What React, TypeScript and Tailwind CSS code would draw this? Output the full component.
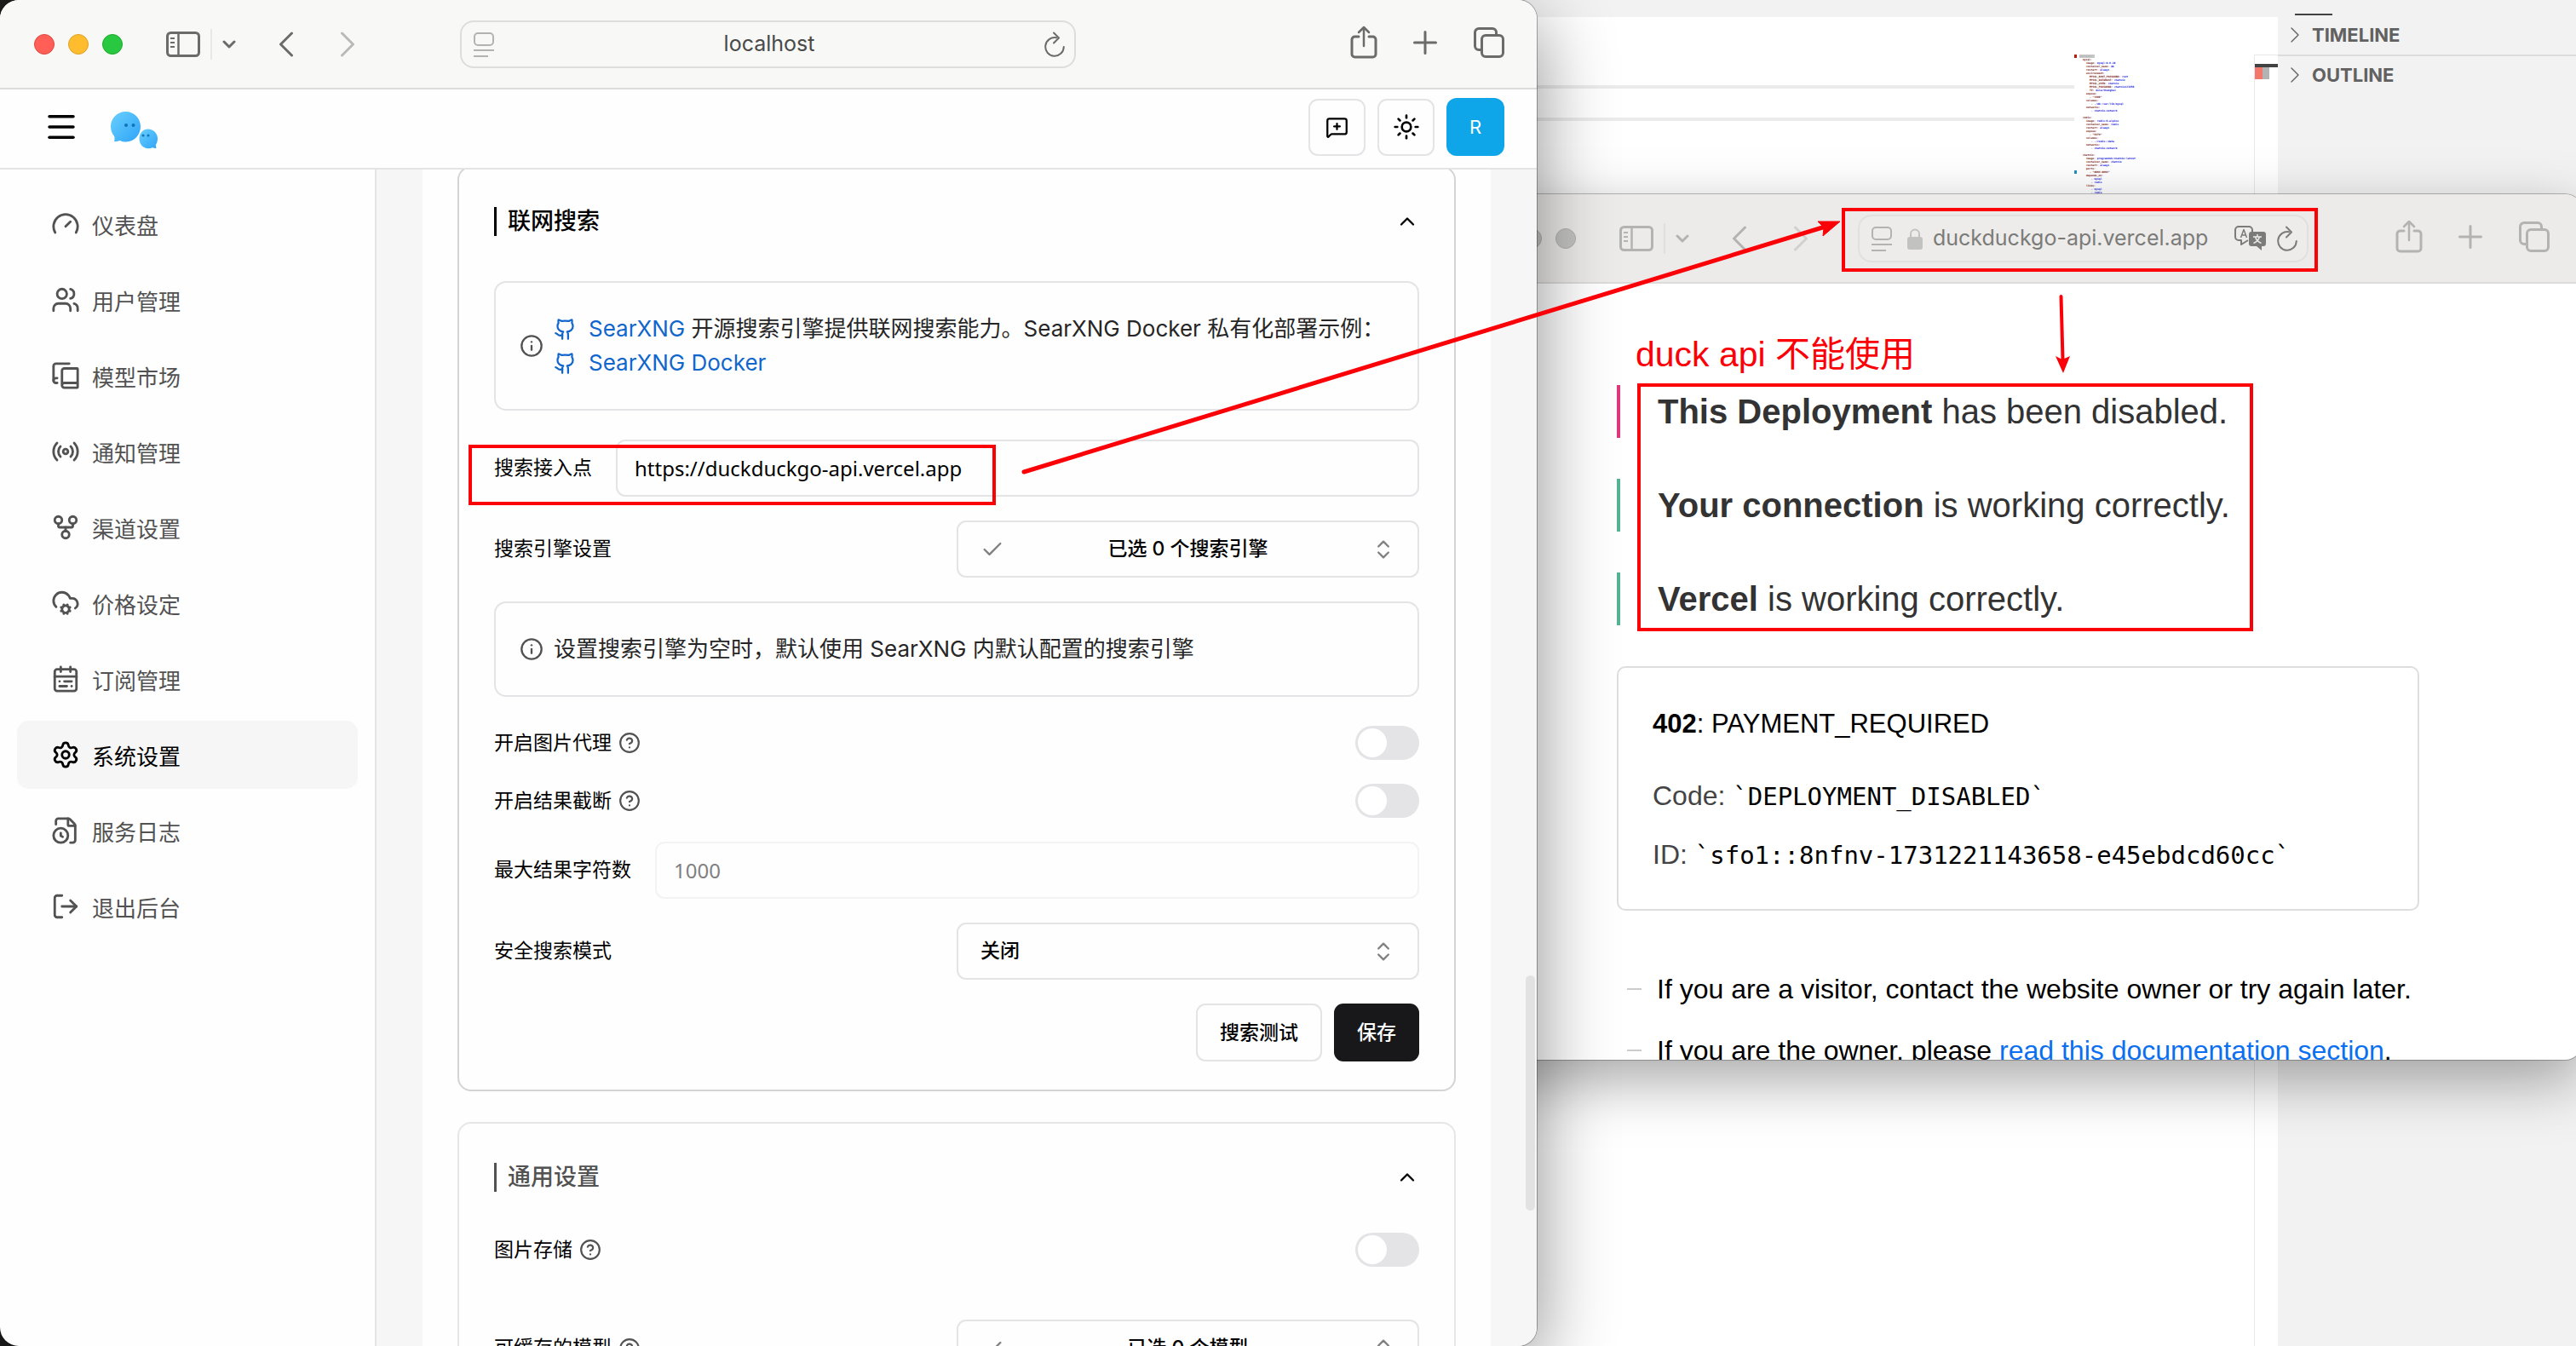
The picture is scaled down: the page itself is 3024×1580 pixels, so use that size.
import React from 'react';
import {
  CalendarRange,
  Check,
  ChevronRight,
  ChevronsUpDown,
  ChevronUp,
  CircleQuestionMark,
  CloudCog,
  FileClock,
  Gauge,
  GitFork,
  Github,
  Info,
  LogOut,
  Menu,
  MessageSquarePlus,
  Radio,
  Settings,
  Sun,
  Users,
} from 'lucide-react';

/* ---------- Browser chrome icons ---------- */

const SidebarIcon = () => (
  <svg viewBox="0 0 40 32" className="h-8 w-10" fill="none" stroke="currentColor" strokeWidth="3">
    <rect x="1.5" y="2.5" width="37" height="27" rx="4" />
    <path d="M14.500 2.500v27" strokeWidth="2.500" />
    <path d="M5 9h5M5 14h5M5 19h5" strokeWidth="2" />
  </svg>
);

const Chevron = ({ dir }: { dir: 'left' | 'right' }) => (
  <svg
    viewBox="0 0 18 30"
    className="h-[30px] w-[18px]"
    fill="none"
    stroke="currentColor"
    strokeWidth="3"
    strokeLinecap="round"
    strokeLinejoin="round"
  >
    <path d={dir === 'left' ? 'M15.500 2L2.500 15l13 13' : 'M2.500 2l13 13-13 13'} />
  </svg>
);

const SmallDown = () => (
  <svg viewBox="0 0 16 12" className="h-3 w-4" fill="none" stroke="currentColor" strokeWidth="3" strokeLinecap="round" strokeLinejoin="round">
    <path d="M2 3l6 6 6-6" />
  </svg>
);

const ReaderIcon = () => (
  <svg viewBox="0 0 24 30" className="h-[30px] w-6" fill="none" stroke="currentColor" strokeWidth="2">
    <rect x="1" y="2" width="22" height="14" rx="4" />
    <path d="M0 22h24M0 29h17" />
  </svg>
);

const ReloadIcon = () => (
  <svg viewBox="0 0 24 30" className="h-[30px] w-6" fill="none" stroke="currentColor" strokeWidth="2" strokeLinecap="round" strokeLinejoin="round">
    <path d="M14 7.300A10.800 10.800 0 1 0 22.800 18" />
    <path d="M11 1.500l6 6-6 6" />
  </svg>
);

const ShareIcon = () => (
  <svg viewBox="0 0 32 40" className="h-10 w-8" fill="none" stroke="currentColor" strokeWidth="3" strokeLinecap="round" strokeLinejoin="round">
    <path d="M10 13H5.500A3.500 3.500 0 0 0 2 16.500v17A3.500 3.500 0 0 0 5.500 37h21a3.500 3.500 0 0 0 3.500-3.500v-17a3.500 3.500 0 0 0-3.500-3.500H22" />
    <path d="M16 24V2M10 8l6-6 6 6" strokeWidth="2.500" />
  </svg>
);

const PlusIcon = () => (
  <svg viewBox="0 0 28 28" className="size-7" fill="none" stroke="currentColor" strokeWidth="3" strokeLinecap="round">
    <path d="M14 1.500v25M1.500 14h25" />
  </svg>
);

const TabsIcon = () => (
  <svg viewBox="0 0 36 36" className="size-9" fill="none" stroke="currentColor" strokeWidth="3">
    <rect x="9.500" y="9.500" width="25" height="25" rx="4.500" />
    <path d="M9.500 26.500H6A4.500 4.500 0 0 1 1.500 22V6A4.500 4.500 0 0 1 6 1.500h16A4.500 4.500 0 0 1 26.500 6v3.500" />
  </svg>
);

const LockIcon = () => (
  <svg viewBox="0 0 18 26" className="h-[26px] w-[18px]">
    <path d="M4 12V7.500a5 5 0 0 1 10 0V12" fill="none" stroke="currentColor" strokeWidth="2" />
    <rect x="0" y="11" width="18" height="15" rx="3" fill="currentColor" />
  </svg>
);

const TranslateIcon = () => (
  <svg viewBox="0 0 38 30" className="h-[30px] w-[38px]" fill="none" stroke="currentColor" strokeWidth="2" strokeLinejoin="round">
    <path d="M16 17l-8 5v-5H5a4 4 0 0 1-4-4V5a4 4 0 0 1 4-4h12a4 4 0 0 1 4 4v2" />
    <path d="M7.500 14L11 4.500l3.500 9.500M8.800 11h4.400" strokeWidth="1.500" />
    <path d="M20 7h14a3 3 0 0 1 3 3v11a3 3 0 0 1-3 3h-2v5l-6-5h-6a3 3 0 0 1-3-3V10a3 3 0 0 1 3-3z" fill="currentColor" stroke="none" />
    <path d="M27 10v2.500M22 13h10M29.500 13c-1 3.500-3.500 6-7 7.500M24.500 13c1 3.500 3.500 6 7 7.500" stroke="#ecebe9" strokeWidth="1.500" />
  </svg>
);

type NavIconProps = { size?: number; strokeWidth?: number };

const BookCopyIcon = ({ size = 24, strokeWidth = 2 }: NavIconProps) => (
  <svg
    width={size}
    height={size}
    viewBox="0 0 24 24"
    fill="none"
    stroke="currentColor"
    strokeWidth={strokeWidth}
    strokeLinecap="round"
    strokeLinejoin="round"
  >
    <path d="M2 16V4a2 2 0 0 1 2-2h11" />
    <path d="M22 18H11a2 2 0 1 0 0 4h10.500a.5.5 0 0 0 .5-.5v-15a.5.5 0 0 0-.5-.5H11a2 2 0 0 0-2 2v12" />
    <path d="M5 14H4a2 2 0 1 0 0 4h1" />
  </svg>
);

const Logo = () => (
  <svg viewBox="0 0 58 46" className="h-[46px] w-[58px]" aria-label="Logo">
    <defs>
      <linearGradient id="bubble" x1="0" y1="0" x2="1" y2="1">
        <stop offset="0" stopColor="#6ad0fd" />
        <stop offset="1" stopColor="#2ea3f8" />
      </linearGradient>
    </defs>
    <path d="M18.500 1C28.500 1 36 9 36 18.500S29 36.500 19 36.500c-3 0-5-.5-7-1.500-2 .5-4.500 1.500-7 1 .8-2 .5-4 .2-6C2.500 27 1 23 1 18.500 1 9 8.500 1 18.500 1z" fill="url(#bubble)" />
    <path d="M45 21.500c6 0 11 5 11 11 0 3-.8 5.500-2.200 7.500.2 1.500.4 2.500.7 4-1.500.2-3-.1-4.500-.7a11 11 0 0 1-5 1c-6 0-10.500-5-10.500-11.500S39 21.500 45 21.500z" fill="url(#bubble)" />
    <circle cx="19" cy="17" r="2" fill="#1173b5" />
    <circle cx="27.500" cy="17" r="2" fill="#1173b5" />
    <circle cx="39" cy="29" r="1.500" fill="#1173b5" />
    <circle cx="45" cy="29" r="1.500" fill="#1173b5" />
  </svg>
);

/* ---------- Editor behind the windows ---------- */

const minimap: [number, string, string][] = [
  [0, 'services:', ''],
  [1, 'mysql:', ''],
  [2, 'image:', 'mysql:8.0.28'],
  [2, 'container_name:', 'db'],
  [2, 'restart:', 'always'],
  [2, 'environment:', ''],
  [3, 'MYSQL_ROOT_PASSWORD:', 'root'],
  [3, 'MYSQL_DATABASE:', 'chatnio'],
  [3, 'MYSQL_USER:', 'chatnio'],
  [3, 'MYSQL_PASSWORD:', 'chatnio123456'],
  [3, 'TZ:', 'Asia/Shanghai'],
  [2, 'expose:', ''],
  [3, '- "3306"', ''],
  [2, 'volumes:', ''],
  [3, '', '- ./db:/var/lib/mysql'],
  [2, 'networks:', ''],
  [3, '', '- chatnio-network'],
  [0, '', ''],
  [1, 'redis:', ''],
  [2, 'image:', 'redis:6-alpine'],
  [2, 'container_name:', 'redis'],
  [2, 'restart:', 'always'],
  [2, 'expose:', ''],
  [3, '- "6379"', ''],
  [2, 'volumes:', ''],
  [3, '', '- ./redis:/data'],
  [2, 'networks:', ''],
  [3, '', '- chatnio-network'],
  [0, '', ''],
  [1, 'chatnio:', ''],
  [2, 'image:', 'programzmh/chatnio:latest'],
  [2, 'container_name:', 'chatnio'],
  [2, 'restart:', 'always'],
  [2, 'ports:', ''],
  [3, '- "8094:8094"', ''],
  [2, 'depends_on:', ''],
  [3, '', '- mysql'],
  [3, '', '- redis'],
  [2, 'links:', ''],
  [3, '', '- mysql'],
  [3, '', '- redis'],
];

const indents = ['pl-0', 'pl-1', 'pl-2', 'pl-3'];

const Editor = () => (
  <div className="absolute inset-y-0 right-0 left-[1000px] flex bg-[#f2f2f2]">
    <div className="flex flex-1 flex-col">
      <div className="h-5 bg-[#f2f2f2]" />
      <div className="flex flex-1 bg-white">
        <div className="flex-1 pt-20">
          <div className="h-[42px] border-y-4 border-[#ebebeb]" />
        </div>
        <div className="mt-11 flex w-[211px]">
          <div className="w-[3px]">
            <div className="h-1 bg-[#b5200d]" />
            <div className="mt-[132px] h-1 bg-[#2090c0]" />
          </div>
          <pre className="pl-[3px] font-['DejaVu_Sans_Mono',monospace] text-[3px] leading-[4px] font-bold">
            {minimap.map(([depth, key, value], i) => (
              <div key={i} className={`h-1 ${indents[depth]} ${i === 0 ? 'w-[18px] bg-[#c8c8c8]' : ''}`}>
                <span className={i === 0 ? 'text-[#b0b0b0]' : 'text-[#7a1010]'}>{key}</span>
                {value && <span className="text-[#1010dd]"> {value}</span>}
              </div>
            ))}
          </pre>
        </div>
        <div className="mt-11 w-7 border-t border-l border-[#e8e8e8]">
          <div className="mt-2.5 h-1 bg-[#424242]" />
          <div className="flex h-3.5">
            <div className="w-[9px] bg-[#f4776c]" />
            <div className="w-2 bg-[#b3b3b3]" />
          </div>
        </div>
      </div>
    </div>
    <div className="w-[350px] bg-[#f2f2f2] font-['Inter','Liberation_Sans',sans-serif] text-[22px] font-bold text-[#616161]">
      <div className="mt-4 ml-5 h-[2px] w-11 bg-[#424242]" />
      <button className="flex h-12 w-full items-center gap-1 border-b-2 border-[#dcdcdc] pl-1">
        <ChevronRight size={32} strokeWidth={1} absoluteStrokeWidth={false} />
        TIMELINE
      </button>
      <button className="flex h-11 w-full items-center gap-1 pl-1">
        <ChevronRight size={32} strokeWidth={1} absoluteStrokeWidth={false} />
        OUTLINE
      </button>
    </div>
  </div>
);

/* ---------- Error page window ---------- */

const StatusLine = ({ tone, strong, rest }: { tone: string; strong: string; rest: string }) => (
  <p className={`border-l-4 pl-11 text-[40px] leading-[62px] text-[#333] ${tone}`}>
    <strong>{strong}</strong> {rest}
  </p>
);

const ErrorWindow = () => (
  <div className="absolute top-[228px] right-[-7px] left-[1706px] flex h-[1016px] flex-col overflow-hidden rounded-[20px] bg-white shadow-[0_0_0_1px_rgba(0,0,0,0.25),0_24px_70px_rgba(0,0,0,0.35)]">
    <div className="flex h-[105px] shrink-0 items-center border-b-2 border-[#dcdbd9] bg-[#ecebe9] pr-[38px] pl-10 text-[#b3b3b1]">
      <div className="flex gap-4">
        <span className="size-6 rounded-full border border-[#b0b0ae] bg-[#c4c4c2]" />
        <span className="size-6 rounded-full border border-[#b0b0ae] bg-[#c4c4c2]" />
        <span className="size-6 rounded-full border border-[#b0b0ae] bg-[#c4c4c2]" />
      </div>
      <button className="ml-[51px]" aria-label="Sidebar"><SidebarIcon /></button>
      <span className="ml-3 h-9 w-[2px] bg-[#e0dfdd]" />
      <button className="ml-3" aria-label="Tab groups"><SmallDown /></button>
      <button className="ml-[50px]" aria-label="Back"><Chevron dir="left" /></button>
      <button className="ml-[54px] text-[#d0d0ce]" aria-label="Forward"><Chevron dir="right" /></button>
      <div className="ml-[58px] flex h-14 flex-1 items-center rounded-2xl border-2 border-[#e0e0de] bg-[#edecea] pr-[11px] pl-3.5">
        <ReaderIcon />
        <div className="flex flex-1 items-center pl-[18px] font-['Inter','Liberation_Sans',sans-serif] text-[25px] text-[#7b7b79]">
          <span className="text-[#c2c2c0]"><LockIcon /></span>
          <span className="pl-3">duckduckgo-api.vercel.app</span>
        </div>
        <span className="text-[#7b7b79]"><TranslateIcon /></span>
        <button className="pl-3 text-[#7b7b79]" aria-label="Reload"><ReloadIcon /></button>
      </div>
      <button className="ml-[102px] pb-1" aria-label="Share"><ShareIcon /></button>
      <button className="ml-[42px] pb-1" aria-label="New tab"><PlusIcon /></button>
      <button className="ml-[43px] pb-1" aria-label="Tab overview"><TabsIcon /></button>
    </div>
    <div className="flex-1 overflow-hidden pt-[119px] pr-[191px] pl-48 font-['Liberation_Sans',Arial,sans-serif]">
      <div className="flex flex-col gap-12">
        <StatusLine tone="border-[#e0387c]" strong="This Deployment" rest="has been disabled." />
        <StatusLine tone="border-[#56b492]" strong="Your connection" rest="is working correctly." />
        <StatusLine tone="border-[#56b492]" strong="Vercel" rest="is working correctly." />
      </div>
      <div className="mt-12 h-[287px] rounded-[10px] border-2 border-[#dedede] pt-8 pl-10 text-[32px] text-[#444]">
        <p className="text-[31px] leading-[68px] text-black"><strong>402</strong>: PAYMENT_REQUIRED</p>
        <p className="mt-4 leading-[68px]">
          Code: <code className="font-['DejaVu_Sans_Mono',monospace] text-[29px] text-black">`DEPLOYMENT_DISABLED`</code>
        </p>
        <p className="leading-[68px]">
          ID: <code className="font-['DejaVu_Sans_Mono',monospace] text-[29px] text-black">`sfo1::8nfnv-1731221143658-e45ebdcd60cc`</code>
        </p>
      </div>
      <ul className="mt-14 text-[32px] leading-[72px] whitespace-nowrap text-black">
        <li className="flex items-center pl-3">
          <span className="mr-[18px] h-[2px] w-[17px] bg-[#ccc]" />
          If you are a visitor, contact the website owner or try again later.
        </li>
        <li className="flex items-center pl-3">
          <span className="mr-[18px] h-[2px] w-[17px] bg-[#ccc]" />
          <span>If you are the owner, please <a href="#docs" className="text-[#0a6ff0]">read this documentation section</a>.</span>
        </li>
      </ul>
    </div>
  </div>
);

/* ---------- Settings window ---------- */

const nav: [string, React.ComponentType<NavIconProps>][] = [
  ['仪表盘', Gauge],
  ['用户管理', Users],
  ['模型市场', BookCopyIcon],
  ['通知管理', Radio],
  ['渠道设置', GitFork],
  ['价格设定', CloudCog],
  ['订阅管理', CalendarRange],
  ['系统设置', Settings],
  ['服务日志', FileClock],
  ['退出后台', LogOut],
];

const Row = ({ children, className = '' }: { children: React.ReactNode; className?: string }) => (
  <div className={`flex items-center justify-between ${className}`}>{children}</div>
);

const Switch = ({ id }: { id: string }) => (
  <span className="relative flex h-10 w-[75px]">
    <input id={id} type="checkbox" role="switch" className="peer size-full appearance-none rounded-full bg-[#e4e4e7]" />
    <span className="pointer-events-none absolute top-[3px] left-[3px] size-[34px] rounded-full bg-white" />
  </span>
);

const Help = () => <CircleQuestionMark size={26} strokeWidth={2} className="ml-2 text-[#525252]" />;

const MultiSelect = ({ id, text }: { id: string; text: string }) => (
  <button id={id} className="flex h-[67px] w-1/2 items-center justify-between rounded-[11px] border-2 border-[#e4e4e7] px-[26px] text-[23px] font-medium">
    <Check size={28} strokeWidth={2} className="text-[#808080]" />
    {text}
    <ChevronsUpDown size={28} strokeWidth={2} className="text-[#808080]" />
  </button>
);

const CardHead = ({ title, tone, bar }: { title: string; tone: string; bar: string }) => (
  <div className="flex h-[126px] items-center">
    <span className={`mr-[13px] h-[34px] w-[3px] ${bar}`} />
    <h2 className={`flex-1 text-[27px] font-medium ${tone}`}>{title}</h2>
    <button className="text-black" aria-label={`收起${title}`}><ChevronUp size={28} strokeWidth={2} /></button>
  </div>
);

const GhLink = ({ children }: { children: string }) => (
  <a href="#github" className="text-[#1166cc]">
    <Github size={27} strokeWidth={2} className="mr-3.5 inline-block align-[-5px]" />
    {children}
  </a>
);

const SettingsWindow = () => (
  <div className="absolute inset-y-0 right-[1220px] left-0 flex flex-col overflow-hidden rounded-[22px] bg-[#fefefe] shadow-[0_0_0_1px_rgba(0,0,0,0.3),0_24px_90px_rgba(0,0,0,0.45)]">
    <div className="flex h-[105px] shrink-0 items-center border-b-2 border-[#dcdcda] bg-[#f8f8f7] pr-[38px] pl-10 text-[#6b6b6a]">
      <div className="flex gap-4">
        <span className="size-6 rounded-full border border-[#e0443e] bg-[#ff5f57]" />
        <span className="size-6 rounded-full border border-[#dea123] bg-[#febc2e]" />
        <span className="size-6 rounded-full border border-[#1aab29] bg-[#28c840]" />
      </div>
      <button className="ml-[51px]" aria-label="Sidebar"><SidebarIcon /></button>
      <span className="ml-3 h-9 w-[2px] bg-[#e8e8e7]" />
      <button className="ml-3" aria-label="Tab groups"><SmallDown /></button>
      <button className="ml-[50px]" aria-label="Back"><Chevron dir="left" /></button>
      <button className="ml-[54px] text-[#b9b9b8]" aria-label="Forward"><Chevron dir="right" /></button>
      <div className="ml-[123px] flex h-14 w-[723px] items-center rounded-2xl border-2 border-[#dddddc] bg-[#f8f8f7] pr-[11px] pl-3.5">
        <span className="text-[#b3b3b2]"><ReaderIcon /></span>
        <span className="flex-1 text-center font-['Inter','Liberation_Sans',sans-serif] text-[25px] text-[#4a4a49]">localhost</span>
        <button aria-label="Reload"><ReloadIcon /></button>
      </div>
      <button className="ml-auto pb-1" aria-label="Share"><ShareIcon /></button>
      <button className="ml-[42px] pb-1" aria-label="New tab"><PlusIcon /></button>
      <button className="ml-[43px] pb-1" aria-label="Tab overview"><TabsIcon /></button>
    </div>

    <header className="flex h-[94px] shrink-0 items-center gap-3.5 border-b-2 border-[#e4e4e7] pr-[38px] pb-1 pl-[51px] text-black">
      <button aria-label="Menu"><Menu size={42} strokeWidth={2} /></button>
      <span className="mr-auto ml-[22px] pt-2"><Logo /></span>
      <button className="flex size-[67px] items-center justify-center rounded-[11px] border-2 border-[#e4e4e7]" aria-label="新对话">
        <MessageSquarePlus size={27} strokeWidth={2} />
      </button>
      <button className="flex size-[67px] items-center justify-center rounded-[11px] border-2 border-[#e4e4e7]" aria-label="主题">
        <Sun size={32} strokeWidth={2} />
      </button>
      <button className="flex size-[68px] items-center justify-center rounded-xl bg-[#0ea5e9] text-[22px] text-white">R</button>
    </header>

    <div className="flex min-h-0 flex-1">
      <nav className="flex w-[442px] shrink-0 flex-col gap-[9px] border-r-2 border-[#e4e4e7] px-5 pt-6">
        {nav.map(([label, Icon]) => (
          <a
            key={label}
            href="#nav"
            className={`flex h-20 items-center gap-3.5 rounded-[14px] pl-10 text-[26px] ${
              label === '系统设置' ? 'bg-[#f6f6f6] text-black' : 'text-[#525252]'
            }`}
          >
            <Icon size={34} strokeWidth={2} />
            <span className="pt-1">{label}</span>
          </a>
        ))}
      </nav>
      <main className="relative flex-1 overflow-hidden bg-[#f6f6f6] px-[54px]">
        <div className="min-h-full bg-[#fefefe] px-[41px] text-black">
          <section className="-mt-1 rounded-2xl border-2 border-[#d4d4d4] px-[41px] pb-[33px]">
            <CardHead title="联网搜索" tone="text-black" bar="bg-black" />
            <div className="mt-[7px] mb-[34px] flex items-center gap-3 rounded-[14px] border-2 border-[#e4e4e7] px-7 py-[34px] text-[26px] leading-10 text-[#262626]">
              <Info size={28} strokeWidth={2} className="shrink-0 text-[#525252]" />
              <p>
                <GhLink>SearXNG</GhLink> 开源搜索引擎提供联网搜索能力。SearXNG Docker 私有化部署示例：
                <br />
                <GhLink>SearXNG Docker</GhLink>
              </p>
            </div>
            <Row className="mb-7 gap-7">
              <label htmlFor="endpoint" className="shrink-0 text-[23px]">搜索接入点</label>
              <input
                id="endpoint"
                defaultValue="https://duckduckgo-api.vercel.app"
                className="h-[67px] min-w-0 flex-1 rounded-[11px] border-2 border-[#e4e4e7] px-5 font-['Noto_Sans','Open_Sans',sans-serif] text-2xl"
              />
            </Row>
            <Row className="mb-7">
              <label htmlFor="engines" className="text-[23px]">搜索引擎设置</label>
              <MultiSelect id="engines" text="已选 0 个搜索引擎" />
            </Row>
            <div className="mb-[34px] flex items-center gap-3 rounded-[14px] border-2 border-[#e4e4e7] px-7 py-[34px] text-[26px] leading-10 text-[#262626]">
              <Info size={28} strokeWidth={2} className="shrink-0 text-[#525252]" />
              <p>设置搜索引擎为空时，默认使用 SearXNG 内默认配置的搜索引擎</p>
            </div>
            <Row className="mb-7">
              <label htmlFor="proxy" className="flex items-center text-[23px]">开启图片代理<Help /></label>
              <Switch id="proxy" />
            </Row>
            <Row className="mb-7">
              <label htmlFor="crop" className="flex items-center text-[23px]">开启结果截断<Help /></label>
              <Switch id="crop" />
            </Row>
            <Row className="mb-7 gap-7">
              <label htmlFor="maxlen" className="shrink-0 text-[23px]">最大结果字符数</label>
              <input
                id="maxlen"
                defaultValue="1000"
                className="h-[67px] min-w-0 flex-1 rounded-[11px] border-2 border-[#f3f3f3] px-5 font-['Noto_Sans','Open_Sans',sans-serif] text-2xl text-[#808080]"
              />
            </Row>
            <Row className="mb-7">
              <label htmlFor="safe" className="text-[23px]">安全搜索模式</label>
              <span className="relative flex w-1/2 items-center">
                <select id="safe" className="h-[67px] w-full appearance-none rounded-[11px] border-2 border-[#e4e4e7] bg-transparent px-[26px] text-[23px] font-medium">
                  <option>关闭</option>
                </select>
                <ChevronsUpDown size={28} strokeWidth={2} className="pointer-events-none absolute right-7 text-[#808080]" />
              </span>
            </Row>
            <div className="flex justify-end gap-3.5 text-[23px] font-medium">
              <button className="h-[68px] rounded-[11px] border-2 border-[#e4e4e7] px-[26px]">搜索测试</button>
              <button className="h-[68px] rounded-[11px] bg-[#18181b] px-[27px] text-white">保存</button>
            </div>
          </section>

          <section className="mt-9 rounded-2xl border-2 border-[#e6e6e6] px-[41px]">
            <CardHead title="通用设置" tone="text-[#525252]" bar="bg-[#525252]" />
            <Row className="mt-[2px] mb-[62px]">
              <label htmlFor="store" className="flex items-center text-[23px]">图片存储<Help /></label>
              <Switch id="store" />
            </Row>
            <Row>
              <label htmlFor="models" className="flex items-center text-[23px]">可缓存的模型<Help /></label>
              <MultiSelect id="models" text="已选 0 个模型" />
            </Row>
          </section>
        </div>
        <div className="absolute top-[946px] right-[2px] h-[276px] w-[11px] rounded-full bg-[#e2e2e2]" />
      </main>
    </div>
  </div>
);

/* ---------- Red mark-up drawn over the desktop ---------- */

const Annotations = () => (
  <div className="pointer-events-none absolute inset-0">
    <div className="absolute top-[522px] left-[550px] h-[71px] w-[619px] border-4 border-[#fb0007]" />
    <div className="absolute top-[244px] left-[2162px] h-[75px] w-[559px] border-4 border-[#fb0007]" />
    <div className="absolute top-[450px] left-[1922px] h-[291px] w-[723px] border-4 border-[#fb0007]" />
    <p className="absolute top-[386px] left-[1920px] font-['Liberation_Sans','Noto_Sans_CJK_SC',sans-serif] text-[41px] leading-[60px] whitespace-nowrap text-[#fb0007]">
      duck api 不能使用
    </p>
    <svg className="absolute top-0 left-0 h-[600px] w-[2500px]" viewBox="0 0 2500 600" fill="#fb0007">
      <path d="M1202 554L2146 265" stroke="#fb0007" strokeWidth="5" strokeLinecap="round" />
      <path d="M2160 260l-20 17 1-10-7-7z" stroke="#fb0007" strokeWidth="1" />
      <path d="M2419.500 348L2421.500 422" stroke="#fb0007" strokeWidth="4" strokeLinecap="round" />
      <path d="M2422 438l-9-20 8 4 9-4z" />
    </svg>
  </div>
);

export default function App() {
  return (
    <div className="relative h-screen w-full overflow-hidden bg-[#1e1e1e] font-['Inter','Noto_Sans_CJK_SC',sans-serif]">
      <Editor />
      <ErrorWindow />
      <SettingsWindow />
      <Annotations />
    </div>
  );
}
